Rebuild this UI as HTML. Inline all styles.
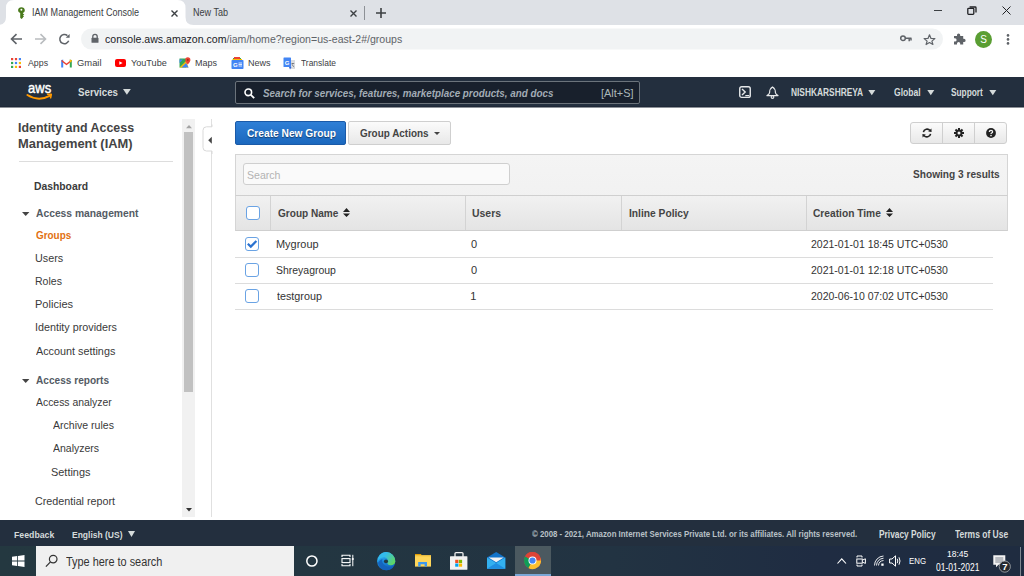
<!DOCTYPE html>
<html><head><meta charset="utf-8">
<style>
*{box-sizing:border-box;margin:0;padding:0}
html,body{width:1024px;height:576px;overflow:hidden;background:#fff;font-family:"Liberation Sans",sans-serif;position:relative}
.a{position:absolute}
.t{position:absolute;white-space:nowrap;line-height:1;transform-origin:0 0}
svg{position:absolute;overflow:visible}

</style></head><body>
<!-- chrome tab strip -->
<div class="a" style="left:0;top:0;width:1024px;height:25px;background:#dee1e6"></div>
<svg style="left:0;top:0" width="200" height="26"><path d="M-2 25 Q6 25 6 17 L6 8 Q6 0 14 0 L177.5 0 Q185.5 0 185.5 8 L185.5 17 Q185.5 25 193.5 25 Z" fill="#fff"/></svg>
<!-- favicon key -->
<svg style="left:16px;top:6px" width="12" height="14" viewBox="0 0 12 14"><path d="M5.4 1.2 C7.4 1.2 8.8 2.4 8.8 4.3 C8.8 5.6 8 6.5 6.9 7 V7.6 L8.3 8.5 L6.9 9.4 L8.1 10.3 L6.9 11.2 V11.8 L5.5 13 L4.2 11.8 V7 C3 6.5 2.1 5.6 2.1 4.3 C2.1 2.4 3.5 1.2 5.4 1.2Z" fill="#4a7a1c"/><circle cx="5.4" cy="3.7" r="1" fill="#fff"/></svg>
<svg style="left:171px;top:10px" width="7" height="7"><path d="M0.5 0.5 L6.5 6.5 M6.5 0.5 L0.5 6.5" stroke="#3c4043" stroke-width="1.4"/></svg>
<svg style="left:350px;top:10px" width="7" height="7"><path d="M0.5 0.5 L6.5 6.5 M6.5 0.5 L0.5 6.5" stroke="#3c4043" stroke-width="1.4"/></svg>
<div class="a" style="left:364px;top:6px;width:1px;height:14px;background:#8d9196"></div>
<svg style="left:376px;top:8px" width="10" height="10"><path d="M5 0 V10 M0 5 H10" stroke="#3c4043" stroke-width="1.6"/></svg>
<!-- window controls -->
<div class="a" style="left:934px;top:10px;width:8px;height:1.3px;background:#3c4043"></div>
<svg style="left:967px;top:6px" width="10" height="9"><rect x="0.8" y="2.3" width="6" height="6" rx="0.8" fill="none" stroke="#202124" stroke-width="1.3"/><path d="M2.6 1 H8.2 a0.8 0.8 0 0 1 .8 .8 V6.6" fill="none" stroke="#202124" stroke-width="1.3"/></svg>
<svg style="left:1002px;top:6px" width="9" height="9"><path d="M0.5 0.5 L8.5 8.5 M8.5 0.5 L0.5 8.5" stroke="#202124" stroke-width="1"/></svg>
<!-- nav row icons -->
<svg style="left:10px;top:33px" width="13" height="12" viewBox="0 0 13 12"><path d="M12 6 H1.8 M6.5 1.2 L1.5 6 L6.5 10.8" fill="none" stroke="#5f6368" stroke-width="1.6"/></svg>
<svg style="left:34px;top:33px" width="13" height="12" viewBox="0 0 13 12"><path d="M1 6 H11.2 M6.5 1.2 L11.5 6 L6.5 10.8" fill="none" stroke="#b9bcbf" stroke-width="1.6"/></svg>
<svg style="left:58px;top:33px" width="13" height="12" viewBox="0 0 13 12"><path d="M9.4 2.6 A4.6 4.6 0 1 0 10.7 7.8" fill="none" stroke="#5f6368" stroke-width="1.5"/><path d="M11.6 0.9 L11.6 4.8 L7.7 4.8Z" fill="#5f6368"/></svg>
<svg style="left:0;top:0" width="1024" height="60"><rect x="81" y="28.5" width="862" height="21" rx="10.5" fill="#f1f3f4"/></svg>
<svg style="left:91px;top:34px" width="8" height="9" viewBox="0 0 8 9"><path d="M1.8 4 V2.6 a2.2 2.2 0 0 1 4.4 0 V4" fill="none" stroke="#5f6368" stroke-width="1.3"/><rect x="0.5" y="3.8" width="7" height="5" rx="0.6" fill="#5f6368"/></svg>
<svg style="left:900px;top:35px" width="12" height="7" viewBox="0 0 12 7"><circle cx="3" cy="3.2" r="2.3" fill="none" stroke="#5f6368" stroke-width="1.5"/><path d="M5 3.2 H11.5 M9.2 3.2 V6.3 M11 3.2 V5.5" stroke="#5f6368" stroke-width="1.5"/></svg>
<svg style="left:923px;top:34px" width="13" height="11" viewBox="0 0 13 11"><path d="M6.5 0.8 L8 4.4 L11.9 4.6 L8.9 7.1 L9.9 10.5 L6.5 8.6 L3.1 10.5 L4.1 7.1 L1.1 4.6 L5 4.4 Z" fill="none" stroke="#5f6368" stroke-width="1.2" stroke-linejoin="round"/></svg>
<svg style="left:953px;top:33px" width="13" height="12" viewBox="0 0 13 12"><path d="M1 3 H4 V2 a1.6 1.6 0 0 1 3.2 0 V3 H10.2 V5.8 H11 a1.6 1.6 0 0 1 0 3.2 H10.2 V11.5 H7.2 V10.6 a1.6 1.6 0 0 0 -3.2 0 V11.5 H1 V8.5 H2 a1.6 1.6 0 0 0 0 -3.2 H1 Z" fill="#5f6368"/></svg>
<svg style="left:975px;top:30.6px" width="17" height="17"><circle cx="8.5" cy="8.5" r="8.5" fill="#5a9e33"/><text x="8.5" y="12.2" text-anchor="middle" font-family="Liberation Sans" font-size="10" fill="#fff">S</text></svg>
<svg style="left:1006px;top:34px" width="4" height="11"><circle cx="2" cy="1.4" r="1.3" fill="#5f6368"/><circle cx="2" cy="5.4" r="1.3" fill="#5f6368"/><circle cx="2" cy="9.4" r="1.3" fill="#5f6368"/></svg>
<!-- bookmarks icons -->
<svg style="left:11px;top:58px" width="10" height="10"><g>
<rect x="0" y="0" width="2.2" height="2.2" fill="#ea4335"/><rect x="3.9" y="0" width="2.2" height="2.2" fill="#ea4335"/><rect x="7.8" y="0" width="2.2" height="2.2" fill="#4285f4"/>
<rect x="0" y="3.9" width="2.2" height="2.2" fill="#34a853"/><rect x="3.9" y="3.9" width="2.2" height="2.2" fill="#4285f4"/><rect x="7.8" y="3.9" width="2.2" height="2.2" fill="#fbbc05"/>
<rect x="0" y="7.8" width="2.2" height="2.2" fill="#34a853"/><rect x="3.9" y="7.8" width="2.2" height="2.2" fill="#fbbc05"/><rect x="7.8" y="7.8" width="2.2" height="2.2" fill="#ea4335"/></g></svg>
<svg style="left:61px;top:58.5px" width="11" height="8.5" viewBox="0 0 11 8.5"><path d="M0.2 8.5 V1.2 L2.2 0.4 V8.5 Z" fill="#4285f4"/><path d="M10.8 8.5 V1.2 L8.8 0.4 V8.5 Z" fill="#34a853"/><path d="M0.6 0.8 L5.5 4.6 L10.4 0.8 L10.4 2.6 L5.5 6.3 L0.6 2.6 Z" fill="#ea4335"/><path d="M8.8 0.4 L10.8 1.2 L10.8 2.2 L8.8 3.7Z" fill="#fbbc05"/></svg>
<svg style="left:114.5px;top:58.8px" width="11" height="8"><rect x="0" y="0" width="11" height="8" rx="2" fill="#ff0000"/><path d="M4.3 2.2 L7.6 4 L4.3 5.8 Z" fill="#fff"/></svg>
<svg style="left:179px;top:57px" width="12" height="11" viewBox="0 0 12 11"><path d="M0.5 1.5 L7 1.5 L7 10.5 L0.5 10.5 Z" fill="#34a853"/><path d="M0.5 10.5 L7 4 L9.5 10.5 Z" fill="#fbbc05"/><path d="M0.5 6 L4 2.5 L0.5 2.5 Z" fill="#4285f4"/><path d="M2.5 10.5 L7 6 L9.5 10.5Z" fill="#4285f4"/><path d="M8.8 0.3 a2.6 2.6 0 0 1 2.6 2.6 C11.4 4.6 8.8 7.5 8.8 7.5 C8.8 7.5 6.2 4.6 6.2 2.9 a2.6 2.6 0 0 1 2.6 -2.6Z" fill="#ea4335"/><circle cx="8.8" cy="2.9" r="0.9" fill="#a52714"/></svg>
<svg style="left:230.5px;top:57px" width="13" height="12" viewBox="0 0 13 12"><path d="M2 1 H10 V4 H2Z" fill="#34a853"/><path d="M3 0 H9 V2 H3Z" fill="#ea4335"/><path d="M1.5 2 H11 V4 H1.5Z" fill="#fbbc05"/><rect x="0.5" y="3" width="12" height="9" rx="0.8" fill="#4285f4"/><text x="2" y="10" font-family="Liberation Sans" font-weight="700" font-size="6" fill="#fff">G</text><path d="M7.5 6 H11 M7.5 7.5 H11 M7.5 9 H11" stroke="#fff" stroke-width="0.8"/></svg>
<svg style="left:282.8px;top:57px" width="13" height="13" viewBox="0 0 13 13"><path d="M5 3 H12 V12 H7Z" fill="#dadce0"/><rect x="0.5" y="0.5" width="7.5" height="9.5" rx="0.6" fill="#4285f4"/><text x="1.8" y="7.8" font-family="Liberation Sans" font-weight="700" font-size="6" fill="#fff">G</text><path d="M7 12.5 L6 10 H8.5Z" fill="#3367d6"/><path d="M8.5 6.5 H11.2 M9.8 6 V7 M9 7.2 Q10 9.5 11.2 10" stroke="#5f6368" stroke-width="0.7" fill="none"/></svg>
<!-- aws nav -->
<div class="a" style="left:0;top:77px;width:1024px;height:30px;background:#232f3e"></div>
<div class="a" style="left:0;top:106px;width:1024px;height:1px;background:#1e2838"></div>
<div class="a" style="left:0;top:107px;width:1024px;height:1px;background:#8c9197"></div>
<svg style="left:26px;top:82px" width="28" height="20" viewBox="0 0 28 20"><text x="2.1" y="10.7" textLength="23.1" lengthAdjust="spacingAndGlyphs" font-family="Liberation Sans" font-weight="400" font-size="14.6" fill="#fff" stroke="#fff" stroke-width="0.45">aws</text><path d="M1.4 13 Q12.5 20 24.2 13.6" fill="none" stroke="#ff9900" stroke-width="2" stroke-linecap="round"/><path d="M21.6 12.3 L25.3 12.4 L24.6 15.8" fill="none" stroke="#ff9900" stroke-width="1.6" stroke-linecap="round" stroke-linejoin="round"/></svg>
<svg style="left:123.4px;top:89.3px" width="8" height="6"><path d="M0 0 H7.8 L3.9 5.8Z" fill="#d5dbdb"/></svg>
<div class="a" style="left:235.3px;top:81px;width:405px;height:22.7px;background:#18202c;border:1.5px solid #6b737b;border-radius:2px"></div>
<svg style="left:244px;top:88px" width="11" height="11" viewBox="0 0 11 11"><circle cx="4.3" cy="4.3" r="3.3" fill="none" stroke="#fff" stroke-width="1.6"/><path d="M6.8 6.8 L10.2 10.2" stroke="#fff" stroke-width="1.8"/></svg>
<svg style="left:739px;top:86px" width="12" height="12" viewBox="0 0 12 12"><rect x="0.75" y="0.75" width="10.5" height="10.6" rx="1.9" fill="none" stroke="#e6e8ea" stroke-width="1.4"/><path d="M3 2.9 L6.2 6 L3 9.1" fill="none" stroke="#e6e8ea" stroke-width="1.4"/><path d="M6.3 9.6 H10.2" stroke="#e6e8ea" stroke-width="1.2"/></svg>
<svg style="left:765.5px;top:86px" width="13" height="13" viewBox="0 0 13 13"><path d="M6.5 0.9 C4.2 2.2 3.6 4 3.6 6.6 C3.6 8 2.6 8.6 1 9.6 H12 C10.4 8.6 9.4 8 9.4 6.6 C9.4 4 8.8 2.2 6.5 0.9Z" fill="none" stroke="#e6e8ea" stroke-width="1.2" stroke-linejoin="round"/><circle cx="6.5" cy="11" r="1.35" fill="none" stroke="#e6e8ea" stroke-width="1.1"/></svg>
<svg style="left:868px;top:89.8px" width="8" height="6"><path d="M0.3 0 H7.3 L3.8 5.3Z" fill="#d5dbdb"/></svg>
<svg style="left:927px;top:89.8px" width="8" height="6"><path d="M0.3 0 H7.3 L3.8 5.3Z" fill="#d5dbdb"/></svg>
<svg style="left:989px;top:89.8px" width="8" height="6"><path d="M0.3 0 H7.3 L3.8 5.3Z" fill="#d5dbdb"/></svg>
<!-- sidebar -->
<div class="a" style="left:19px;top:161px;width:154px;height:1px;background:#dddddd"></div>
<svg style="left:21.9px;top:211.7px" width="8" height="5"><path d="M0 0 H7.4 L3.7 4Z" fill="#444"/></svg>
<svg style="left:21.9px;top:379.4px" width="8" height="5"><path d="M0 0 H7.4 L3.7 4Z" fill="#444"/></svg>
<div class="a" style="left:182px;top:119px;width:12.7px;height:397.6px;background:#f1f1f1"></div>
<div class="a" style="left:184px;top:132px;width:9px;height:260px;background:#c1c1c1"></div>
<svg style="left:186px;top:124.6px" width="6" height="3.2"><path d="M0 3.2 L3 0 L6 3.2Z" fill="#a3a3a3"/></svg>
<svg style="left:186px;top:508.3px" width="6" height="3.4"><path d="M0 0 L3 3.4 L6 0Z" fill="#333"/></svg>
<div class="a" style="left:211px;top:119px;width:1px;height:398px;background:#e0e0e0"></div>
<svg style="left:200px;top:124px" width="14" height="30"><path d="M12 0.5 V2.8 H6.5 Q3 2.8 3 6.3 V23.5 Q3 27 6.5 27 H12 V30" fill="#fff" stroke="#d9d9d9" stroke-width="1"/><path d="M11.8 12.7 L8.2 16.2 L11.8 19.7Z" fill="#444"/></svg>
<!-- main buttons -->
<div class="a" style="left:234.5px;top:121.3px;width:111px;height:23.4px;border:1px solid #1a5aa8;border-radius:2px;background:linear-gradient(#2f7fd6,#1b68be)"></div>
<div class="a" style="left:348.4px;top:121.3px;width:102.4px;height:23.4px;border:1px solid #cfcfcf;border-radius:2px;background:linear-gradient(#fbfbfb,#e8e8e8)"></div>
<svg style="left:434.3px;top:132px" width="6" height="3"><path d="M0 0 H6 L3 3Z" fill="#444"/></svg>
<div class="a" style="left:910.3px;top:121.6px;width:97.1px;height:22.8px;border:1px solid #cfcfcf;border-radius:3px;background:linear-gradient(#fbfbfb,#e8e8e8)"></div>
<div class="a" style="left:942px;top:122.7px;width:1px;height:20.5px;background:#cfcfcf"></div>
<div class="a" style="left:974px;top:122.7px;width:1px;height:20.5px;background:#cfcfcf"></div>
<svg style="left:921.6px;top:128.4px" width="10" height="10" viewBox="0 0 10 10"><path d="M1.4 4.2 A3.7 3.7 0 0 1 8 2.6" fill="none" stroke="#222" stroke-width="1.6"/><path d="M8.6 5.8 A3.7 3.7 0 0 1 2 7.4" fill="none" stroke="#222" stroke-width="1.6"/><path d="M6.2 3.6 L9.6 3.9 L9.4 0.4Z" fill="#222"/><path d="M3.8 6.4 L0.4 6.1 L0.6 9.6Z" fill="#222"/></svg>
<svg style="left:953.8px;top:128.4px" width="10" height="10" viewBox="0 0 10 10"><g fill="#222"><circle cx="5" cy="5" r="3.4"/><rect x="4" y="0" width="2" height="10"/><rect x="0" y="4" width="10" height="2"/><rect x="4" y="0" width="2" height="10" transform="rotate(45 5 5)"/><rect x="4" y="0" width="2" height="10" transform="rotate(-45 5 5)"/></g><circle cx="5" cy="5" r="1.5" fill="#f2f2f2"/></svg>
<svg style="left:986.2px;top:128.4px" width="10" height="10" viewBox="0 0 10 10"><circle cx="5" cy="5" r="4.9" fill="#222"/><path d="M3.4 3.9 Q3.4 2.3 5 2.3 Q6.6 2.3 6.6 3.7 Q6.6 4.6 5.6 5 Q5 5.3 5 6.1" fill="none" stroke="#f2f2f2" stroke-width="1.3"/><circle cx="5" cy="7.6" r="0.8" fill="#f2f2f2"/></svg>
<!-- table panel -->
<div class="a" style="left:234.5px;top:153.8px;width:773px;height:77px;border:1px solid #d5d5d5;border-bottom:none;background:linear-gradient(#f4f4f4,#efefef)"></div>
<div class="a" style="left:243.2px;top:163.2px;width:266.6px;height:22.3px;border:1px solid #cfcfcf;border-radius:3px;background:#fafafa"></div>
<div class="a" style="left:234.5px;top:195px;width:773px;height:35.5px;border-top:1px solid #cfcfcf;border-bottom:1px solid #cfcfcf;border-left:1px solid #d5d5d5;border-right:1px solid #d5d5d5;background:linear-gradient(#f1f1f1,#e4e4e4)"></div>
<div class="a" style="left:270px;top:196px;width:1px;height:34px;background:#d3d3d3"></div>
<div class="a" style="left:465px;top:196px;width:1px;height:34px;background:#d3d3d3"></div>
<div class="a" style="left:621px;top:196px;width:1px;height:34px;background:#d3d3d3"></div>
<div class="a" style="left:805.5px;top:196px;width:1px;height:34px;background:#d3d3d3"></div>
<svg style="left:343.2px;top:208px" width="7" height="9"><path d="M0 4 L3.5 0 L7 4Z M0 5.6 L3.5 9 L7 5.6Z" fill="#222"/></svg>
<svg style="left:886.3px;top:208px" width="7" height="9"><path d="M0 4 L3.5 0 L7 4Z M0 5.6 L3.5 9 L7 5.6Z" fill="#222"/></svg>
<div class="a" style="left:245.7px;top:206px;width:14px;height:14px;border:1.5px solid #6aa3e4;border-radius:3px;background:#fff"></div>
<div class="a" style="left:234.5px;top:256.5px;width:758.5px;height:1px;background:#dcdcdc"></div>
<div class="a" style="left:234.5px;top:283px;width:758.5px;height:1px;background:#dcdcdc"></div>
<div class="a" style="left:234.5px;top:309px;width:758.5px;height:1px;background:#dcdcdc"></div>
<div class="a" style="left:245.2px;top:237px;width:13.7px;height:13.7px;border:1.5px solid #6aa3e4;border-radius:3px;background:#fff"></div>
<svg style="left:246px;top:238px" width="12" height="12" viewBox="0 0 12 12"><path d="M1.8 5.8 L4.8 8.6 L10.4 3" fill="none" stroke="#2a72d0" stroke-width="2.2"/></svg>
<div class="a" style="left:245.2px;top:263.2px;width:13.7px;height:13.7px;border:1.5px solid #6aa3e4;border-radius:3px;background:#fff"></div>
<div class="a" style="left:245.2px;top:289.4px;width:13.7px;height:13.7px;border:1.5px solid #6aa3e4;border-radius:3px;background:#fff"></div>
<!-- footer -->
<div class="a" style="left:0;top:520px;width:1024px;height:26px;background:#232f3e"></div>
<svg style="left:128px;top:530.5px" width="7" height="6"><path d="M0 0 H7 L3.5 6Z" fill="#d5dbdb"/></svg>
<!-- taskbar -->
<div class="a" style="left:0;top:546px;width:1024px;height:30px;background:linear-gradient(90deg,#243840 0%,#233641 30%,#223342 60%,#1f2c42 80%,#1f2c40 100%)"></div>
<svg style="left:11.7px;top:555.2px" width="12.5" height="12" viewBox="0 0 12.5 12"><path d="M0 1.7 L5.2 1 V5.6 H0Z M6 0.9 L12.5 0 V5.6 H6Z M0 6.4 H5.2 V11 L0 10.3Z M6 6.4 H12.5 V12 L6 11.1Z" fill="#fff"/></svg>
<div class="a" style="left:35.7px;top:546px;width:258px;height:30px;background:#f0f0f0"></div>
<svg style="left:44.5px;top:554.6px" width="13" height="13" viewBox="0 0 13 13"><circle cx="8.2" cy="4.1" r="3.8" fill="none" stroke="#333" stroke-width="1.2"/><path d="M5.5 6.9 L0.9 11.6" stroke="#333" stroke-width="1.3"/></svg>
<svg style="left:306px;top:555px" width="12" height="12"><circle cx="5.9" cy="6" r="5.1" fill="none" stroke="#fff" stroke-width="1.5"/></svg>
<svg style="left:341px;top:554px" width="14" height="13" viewBox="0 0 14 13"><path d="M1 2.9 V1.3 H9 V2.9 M1 10.1 V11.7 H9 V10.1" fill="none" stroke="#fff" stroke-width="1.1"/><rect x="1" y="4.6" width="8" height="4" fill="none" stroke="#fff" stroke-width="1.1"/><path d="M11.8 0.8 V12.2" stroke="#fff" stroke-width="1"/><circle cx="11.8" cy="5" r="1.1" fill="#fff"/></svg>
<svg style="left:376.7px;top:551.8px" width="19" height="19" viewBox="0 0 19 19"><defs><linearGradient id="eg" x1="0.2" y1="0" x2="0.5" y2="1"><stop offset="0" stop-color="#37c3f2"/><stop offset="0.5" stop-color="#1b8be0"/><stop offset="1" stop-color="#1160b8"/></linearGradient><linearGradient id="eg2" x1="0" y1="0.2" x2="1" y2="0.7"><stop offset="0.35" stop-color="#33bbec"/><stop offset="1" stop-color="#62d85a"/></linearGradient></defs><circle cx="9.2" cy="9.2" r="9.1" fill="url(#eg)"/><path d="M9.2 0.1 A9.1 9.1 0 0 1 18.3 9.6 C18 12.5 15.5 13.6 13 13.2 C10.5 12.8 9.8 11 10.5 9.5 C11.5 7.5 9.5 5 6.5 5.2 C4 5.4 1.5 7 0.6 9.5 C1 4.2 4.5 0.1 9.2 0.1Z" fill="url(#eg2)"/><ellipse cx="9" cy="9.4" rx="2.1" ry="1.8" fill="#213a44"/><path d="M1 11 C2 15 5 18 9.5 18.3 C12.5 18.3 15 17 16.5 14.5 C13.5 15.5 10 15 7.5 13 C5.5 11.5 4.5 9 5.5 7 C3 8 1.5 9.5 1 11Z" fill="#1462bb" opacity="0.9"/></svg>
<svg style="left:414.8px;top:554.2px" width="16" height="13" viewBox="0 0 16 13"><path d="M0 0 H6 L6.8 1.4 H0Z" fill="#e39d00"/><rect x="0" y="1.3" width="16" height="11.3" fill="#ffd65a"/><rect x="0" y="1.3" width="16" height="1.2" fill="#f5c542"/><path d="M3.2 12.6 V8 H12 V12.6 H9.6 V10.2 H5.6 V12.6Z" fill="#3c98ef"/></svg>
<svg style="left:450.4px;top:552.3px" width="18" height="18" viewBox="0 0 18 18"><path d="M5 5 V1.6 Q5 0.6 6 0.6 H12 Q13 0.6 13 1.6 V5" fill="none" stroke="#f0f0f0" stroke-width="1.3"/><rect x="0" y="4.2" width="17.4" height="13.5" rx="0.5" fill="#f2f2f2"/><rect x="5.2" y="7.8" width="3.2" height="3.2" fill="#f25022"/><rect x="8.9" y="7.8" width="3.2" height="3.2" fill="#7fba00"/><rect x="5.2" y="11.5" width="3.2" height="3.2" fill="#00a4ef"/><rect x="8.9" y="11.5" width="3.2" height="3.2" fill="#ffb900"/></svg>
<svg style="left:487px;top:552.3px" width="18.5" height="17" viewBox="0 0 18.5 17"><path d="M0 5.5 L9.2 0 L18.3 5.5 V16.7 H0Z" fill="#1273c9"/><path d="M1.5 5.6 H16.8 L9.2 10.2Z" fill="#f2f2f2"/><path d="M0 5.5 L9.2 11 L18.3 5.5 V16.7 H0Z" fill="#33b0ef"/><path d="M0 16.7 L9.2 11 L18.3 16.7Z" fill="#1f8ee0"/></svg>
<div class="a" style="left:515px;top:546px;width:35.8px;height:30px;background:#4b5960"></div>
<div class="a" style="left:515px;top:574px;width:35.8px;height:2px;background:#7aa7d6"></div>
<svg style="left:524.4px;top:552.3px" width="17" height="17" viewBox="0 0 17 17"><circle cx="8.5" cy="8.5" r="8.5" fill="#db4437"/><path d="M8.5 8.5 L16.8 6.5 A8.5 8.5 0 0 1 4.3 15.9Z" fill="#fbc02d"/><path d="M8.5 8.5 L4.3 15.9 A8.5 8.5 0 0 1 1 4.2Z" fill="#0f9d58"/><path d="M1 4.2 L8.5 8.5 H16.8 A8.5 8.5 0 0 0 1 4.2Z" fill="#db4437"/><circle cx="8.5" cy="8.5" r="4" fill="#fff"/><circle cx="8.5" cy="8.5" r="3.1" fill="#4285f4"/></svg>
<svg style="left:837.3px;top:558px" width="9.5" height="6"><path d="M0.5 5.5 L4.75 0.8 L9 5.5" fill="none" stroke="#fff" stroke-width="1.1"/></svg>
<svg style="left:856px;top:554.6px" width="10" height="12" viewBox="0 0 10 12"><path d="M1 2.5 V1 H6 V2.5 M1 9.5 V11 H6 V9.5" fill="none" stroke="#fff" stroke-width="1"/><rect x="0.8" y="4" width="5.5" height="4.2" fill="none" stroke="#fff" stroke-width="1"/><path d="M6.6 5 L9.4 3.8 V8.4 L6.6 7.2" fill="none" stroke="#fff" stroke-width="1"/></svg>
<svg style="left:873.8px;top:555px" width="10" height="11" viewBox="0 0 10 11"><path d="M0.5 10.5 A9.5 9.5 0 0 1 9.5 1 M2.5 10.5 A7.5 7.5 0 0 1 9.5 3.2 M4.5 10.5 A5.5 5.5 0 0 1 9.5 5.5" fill="none" stroke="#fff" stroke-width="0.9"/><rect x="7.3" y="8.5" width="2.3" height="2.3" fill="#fff"/></svg>
<svg style="left:889.4px;top:554.6px" width="13" height="12" viewBox="0 0 13 12"><path d="M0.6 4 H3 L6.5 0.8 V11.2 L3 8 H0.6Z" fill="none" stroke="#fff" stroke-width="1"/><path d="M8.2 3.8 Q9.4 6 8.2 8.2 M10 2.3 Q12 6 10 9.7" fill="none" stroke="#fff" stroke-width="1"/></svg>
<svg style="left:993px;top:555px" width="19" height="18" viewBox="0 0 19 18"><path d="M0.3 0.3 H12.3 V9.8 H5.5 L3 12.3 V9.8 H0.3Z" fill="#f2f2f2"/><path d="M2.3 3 H10.3 M2.3 5 H10.3 M2.3 7 H10.3" stroke="#5f6873" stroke-width="0.8"/><circle cx="11.8" cy="11.6" r="5.6" fill="#262a30" stroke="#9aa0a6" stroke-width="0.9"/><text x="11.9" y="15.2" text-anchor="middle" font-family="Liberation Sans" font-weight="700" font-size="9.5" fill="#fff">7</text></svg>
<div class="a" style="left:1020px;top:547px;width:1px;height:29px;background:#7f8891"></div>

<div class="t" style="left:32.45px;top:8.36px;font-size:10.2px;font-weight:400;color:#3c4043;transform:scaleX(0.8882);">IAM Management Console</div>
<div class="t" style="left:193.45px;top:8.36px;font-size:10.2px;font-weight:400;color:#3c4043;transform:scaleX(0.8879);">New Tab</div>
<div class="t" style="left:105.45px;top:32.58px;font-size:11.6px;font-weight:400;color:#202124;transform:scaleX(0.9106);">console.aws.amazon.com<span style="color:#5f6368">/iam/home?region=us-east-2#/groups</span></div>
<div class="t" style="left:28.15px;top:57.62px;font-size:9.9px;font-weight:400;color:#3c4043;transform:scaleX(0.8905);">Apps</div>
<div class="t" style="left:77.37px;top:57.62px;font-size:9.9px;font-weight:400;color:#3c4043;transform:scaleX(0.9511);">Gmail</div>
<div class="t" style="left:131.30px;top:57.62px;font-size:9.9px;font-weight:400;color:#3c4043;transform:scaleX(0.9219);">YouTube</div>
<div class="t" style="left:195.37px;top:57.62px;font-size:9.9px;font-weight:400;color:#3c4043;transform:scaleX(0.9111);">Maps</div>
<div class="t" style="left:248.30px;top:57.62px;font-size:9.9px;font-weight:400;color:#3c4043;transform:scaleX(0.9146);">News</div>
<div class="t" style="left:301.38px;top:57.62px;font-size:9.9px;font-weight:400;color:#3c4043;transform:scaleX(0.8561);">Translate</div>
<div class="t" style="left:78.00px;top:86.86px;font-size:10.8px;font-weight:700;color:#d5dbdb;transform:scaleX(0.9005);">Services</div>
<div class="t" style="left:263.00px;top:87.63px;font-size:11.3px;font-weight:700;color:#a2acb5;transform:scaleX(0.8694);font-style:italic">Search for services, features, marketplace products, and docs</div>
<div class="t" style="left:600.76px;top:87.89px;font-size:11px;font-weight:400;color:#aab7b8;transform:scaleX(0.9942);">[Alt+S]</div>
<div class="t" style="left:790.68px;top:87.41px;font-size:10.5px;font-weight:700;color:#d5dbdb;transform:scaleX(0.7956);">NISHKARSHREYA</div>
<div class="t" style="left:894.00px;top:87.41px;font-size:10.5px;font-weight:700;color:#d5dbdb;transform:scaleX(0.8161);">Global</div>
<div class="t" style="left:951.46px;top:87.41px;font-size:10.5px;font-weight:700;color:#d5dbdb;transform:scaleX(0.7917);">Support</div>
<div class="t" style="left:17.91px;top:121.32px;font-size:13.2px;font-weight:700;color:#444;transform:scaleX(0.9407);">Identity and Access</div>
<div class="t" style="left:17.91px;top:136.52px;font-size:13.2px;font-weight:700;color:#444;transform:scaleX(0.9774);">Management (IAM)</div>
<div class="t" style="left:34.14px;top:180.69px;font-size:11px;font-weight:700;color:#3a3a3a;transform:scaleX(0.9403);">Dashboard</div>
<div class="t" style="left:35.69px;top:208.46px;font-size:11.5px;font-weight:700;color:#545b64;transform:scaleX(0.8956);">Access management</div>
<div class="t" style="left:35.69px;top:230.39px;font-size:11px;font-weight:700;color:#e2700f;transform:scaleX(0.8999);">Groups</div>
<div class="t" style="left:34.99px;top:252.79px;font-size:11px;font-weight:400;color:#3a3a3a;transform:scaleX(0.9819);">Users</div>
<div class="t" style="left:34.99px;top:275.69px;font-size:11px;font-weight:400;color:#3a3a3a;transform:scaleX(0.9561);">Roles</div>
<div class="t" style="left:34.99px;top:298.89px;font-size:11px;font-weight:400;color:#3a3a3a;transform:scaleX(1.0044);">Policies</div>
<div class="t" style="left:34.72px;top:322.09px;font-size:11px;font-weight:400;color:#3a3a3a;transform:scaleX(0.9786);">Identity providers</div>
<div class="t" style="left:35.69px;top:346.49px;font-size:11px;font-weight:400;color:#3a3a3a;transform:scaleX(0.9825);">Account settings</div>
<div class="t" style="left:35.69px;top:374.96px;font-size:11.5px;font-weight:700;color:#545b64;transform:scaleX(0.8789);">Access reports</div>
<div class="t" style="left:35.69px;top:396.79px;font-size:11px;font-weight:400;color:#3a3a3a;transform:scaleX(0.9460);">Access analyzer</div>
<div class="t" style="left:52.62px;top:419.89px;font-size:11px;font-weight:400;color:#3a3a3a;transform:scaleX(0.9582);">Archive rules</div>
<div class="t" style="left:52.62px;top:442.69px;font-size:11px;font-weight:400;color:#3a3a3a;transform:scaleX(0.9544);">Analyzers</div>
<div class="t" style="left:51.30px;top:467.49px;font-size:11px;font-weight:400;color:#3a3a3a;transform:scaleX(0.9919);">Settings</div>
<div class="t" style="left:34.99px;top:495.69px;font-size:11px;font-weight:400;color:#3a3a3a;transform:scaleX(0.9774);">Credential report</div>
<div class="t" style="left:246.62px;top:127.99px;font-size:11px;font-weight:700;color:#fff;transform:scaleX(0.9264);text-shadow:0 1px 1px rgba(0,0,0,0.45)">Create New Group</div>
<div class="t" style="left:360.31px;top:128.19px;font-size:11px;font-weight:700;color:#444;transform:scaleX(0.9028);">Group Actions</div>
<div class="t" style="left:246.76px;top:170.49px;font-size:11px;font-weight:400;color:#b3b3b3;transform:scaleX(0.9605);">Search</div>
<div class="t" style="left:912.69px;top:169.29px;font-size:11px;font-weight:700;color:#444;transform:scaleX(0.9206);">Showing 3 results</div>
<div class="t" style="left:278.23px;top:207.99px;font-size:11px;font-weight:700;color:#444;transform:scaleX(0.9141);">Group Name</div>
<div class="t" style="left:472.14px;top:207.99px;font-size:11px;font-weight:700;color:#444;transform:scaleX(0.9502);">Users</div>
<div class="t" style="left:629.22px;top:207.99px;font-size:11px;font-weight:700;color:#444;transform:scaleX(0.9304);">Inline Policy</div>
<div class="t" style="left:813.38px;top:207.99px;font-size:11px;font-weight:700;color:#444;transform:scaleX(0.9269);">Creation Time</div>
<div class="t" style="left:275.99px;top:238.69px;font-size:11px;font-weight:400;color:#333;transform:scaleX(0.9946);">Mygroup</div>
<div class="t" style="left:471.07px;top:238.69px;font-size:11px;font-weight:400;color:#333;">0</div>
<div class="t" style="left:811.22px;top:238.69px;font-size:11px;font-weight:400;color:#333;transform:scaleX(0.9547);">2021-01-01 18:45 UTC+0530</div>
<div class="t" style="left:275.99px;top:264.99px;font-size:11px;font-weight:400;color:#333;transform:scaleX(0.9512);">Shreyagroup</div>
<div class="t" style="left:471.07px;top:264.99px;font-size:11px;font-weight:400;color:#333;">0</div>
<div class="t" style="left:811.22px;top:264.99px;font-size:11px;font-weight:400;color:#333;transform:scaleX(0.9547);">2021-01-01 12:18 UTC+0530</div>
<div class="t" style="left:276.69px;top:291.19px;font-size:11px;font-weight:400;color:#333;transform:scaleX(0.9788);">testgroup</div>
<div class="t" style="left:470.37px;top:291.19px;font-size:11px;font-weight:400;color:#333;">1</div>
<div class="t" style="left:811.22px;top:291.19px;font-size:11px;font-weight:400;color:#333;transform:scaleX(0.9547);">2020-06-10 07:02 UTC+0530</div>
<div class="t" style="left:14.30px;top:530.30px;font-size:9.8px;font-weight:700;color:#d5dbdb;transform:scaleX(0.8913);">Feedback</div>
<div class="t" style="left:71.76px;top:530.30px;font-size:9.8px;font-weight:700;color:#d5dbdb;transform:scaleX(0.8671);">English (US)</div>
<div class="t" style="left:532.22px;top:528.56px;font-size:9.5px;font-weight:700;color:#b9c1c7;transform:scaleX(0.8259);">© 2008 - 2021, Amazon Internet Services Private Ltd. or its affiliates. All rights reserved.</div>
<div class="t" style="left:879.30px;top:528.71px;font-size:10.5px;font-weight:700;color:#d5dbdb;transform:scaleX(0.7946);">Privacy Policy</div>
<div class="t" style="left:955.46px;top:528.71px;font-size:10.5px;font-weight:700;color:#d5dbdb;transform:scaleX(0.8089);">Terms of Use</div>
<div class="t" style="left:66.00px;top:555.64px;font-size:12px;font-weight:400;color:#333;transform:scaleX(0.9088);">Type here to search</div>
<div class="t" style="left:909.30px;top:556.34px;font-size:9.4px;font-weight:400;color:#fff;transform:scaleX(0.8364);">ENG</div>
<div class="t" style="left:947.30px;top:549.07px;font-size:9.6px;font-weight:400;color:#fff;transform:scaleX(0.8897);">18:45</div>
<div class="t" style="left:936.23px;top:562.83px;font-size:10px;font-weight:400;color:#fff;transform:scaleX(0.8474);">01-01-2021</div>
</body></html>
